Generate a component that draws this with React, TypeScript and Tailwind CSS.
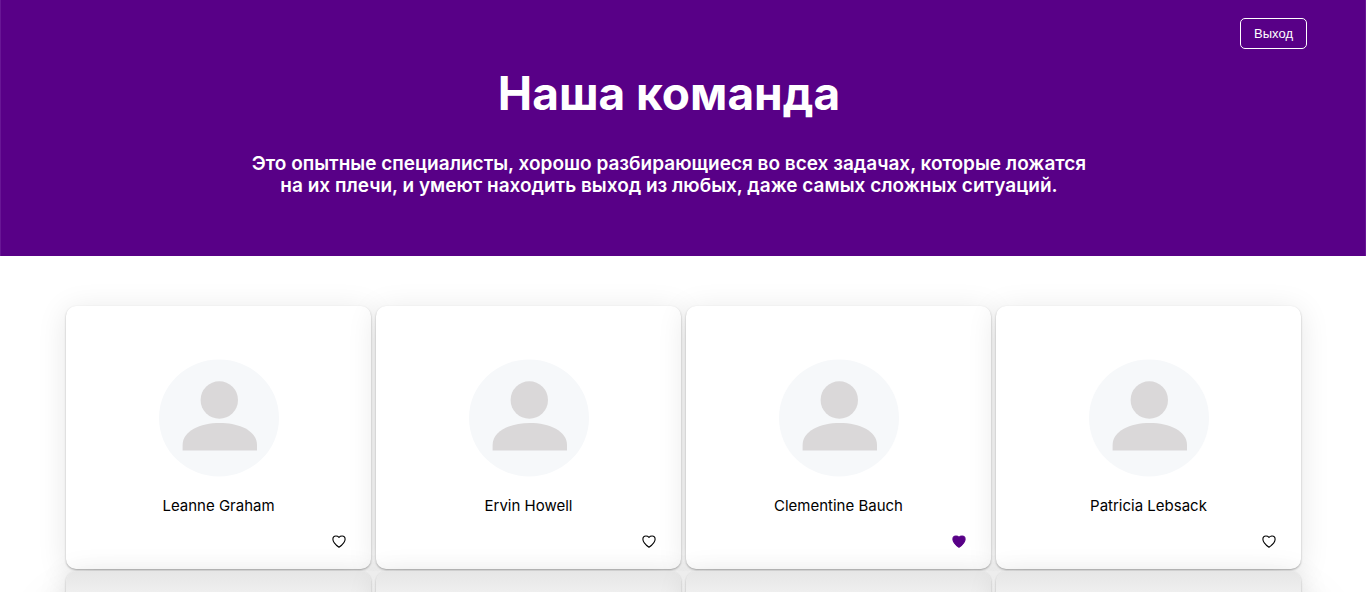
type Member = { id: number; name: string; liked: boolean };

const members: Member[] = [
  { id: 1, name: "Leanne Graham", liked: false },
  { id: 2, name: "Ervin Howell", liked: false },
  { id: 3, name: "Clementine Bauch", liked: true },
  { id: 4, name: "Patricia Lebsack", liked: false },
];

const placeholders = [5, 6, 7, 8];

function Avatar() {
  return (
    <svg width="120" height="118" viewBox="0 0 120 118" aria-hidden="true">
      <ellipse cx="60" cy="59" rx="60" ry="58.5" fill="#f6f8fa" />
      <circle cx="60.3" cy="41" r="18.7" fill="#dad8d9" />
      <path d="M23.6 91.5V86C23.6 72 41 64 60.8 64S98 72 98 86v5.5Z" fill="#dad8d9" />
    </svg>
  );
}

function Heart({ filled }: { filled: boolean }) {
  return (
    <svg width="14" height="13" viewBox="0 0 14 13" aria-hidden="true">
      <path
        d="M7 12.3C5.2 11 .9 7.8.9 4.2.9 2.300 2.200 1 3.900 1 5.200 1 6.300 1.500 7 2.300 7.700 1.500 8.800 1 10.100 1 11.800 1 13.100 2.300 13.100 4.200 13.100 7.800 8.800 11 7 12.300Z"
        fill={filled ? "#580087" : "none"}
        stroke={filled ? "#580087" : "#000"}
        strokeWidth="1.1"
        strokeLinejoin="round"
      />
    </svg>
  );
}

const cardShadow = "shadow-[0_1px_2px_rgba(0,0,0,0.3),0_4px_30px_rgba(0,0,0,0.1)]";

export default function App() {
  return (
    <div className="h-screen overflow-hidden bg-white font-[Inter,'Liberation_Sans',sans-serif] text-black">
      <header className="h-64 border-x border-[#681695] bg-[#580087] pt-[18px] text-white">
        <div className="flex justify-end pr-[58px]">
          <button className="h-[31px] rounded-[5px] border border-white px-[13px] font-['Liberation_Sans',sans-serif] text-[13px]">
            Выход
          </button>
        </div>
        <div className="flex flex-col items-center pr-7 text-center">
          <h1 className="mt-4 text-[46px] leading-[56px] font-bold">Наша команда</h1>
          <h2 className="mt-8 max-w-[846px] text-[19px] leading-[22px] font-semibold">
            Это опытные специалисты, хорошо разбирающиеся во всех задачах, которые ложатся
            на их плечи, и умеют находить выход из любых, даже самых сложных ситуаций.
          </h2>
        </div>
      </header>
      <main className="flex flex-col gap-[2px] pt-[50px] pr-[65px] pl-[66px]">
        <ul className="grid grid-cols-4 gap-[5px]">
          {members.map((member) => (
            <li
              key={member.id}
              className={`flex h-[263px] flex-col items-center rounded-[10px] bg-white pt-[53px] ${cardShadow}`}
            >
              <Avatar />
              <p className="mt-[17px] text-[15px] leading-6">{member.name}</p>
              <button
                aria-label="Нравится"
                aria-pressed={member.liked}
                className="mt-[17px] mr-[25px] self-end"
              >
                <Heart filled={member.liked} />
              </button>
            </li>
          ))}
        </ul>
        <ul className="grid grid-cols-4 gap-[5px] rounded-[10px] shadow-[0_44px_60px_rgba(0,0,0,0.24)]">
          {placeholders.map((id) => (
            <li
              key={id}
              className={`h-[263px] rounded-[10px] bg-linear-to-b from-[#e6e6e6] to-[#f0f0f0] to-[24px] ${cardShadow}`}
            />
          ))}
        </ul>
      </main>
    </div>
  );
}
